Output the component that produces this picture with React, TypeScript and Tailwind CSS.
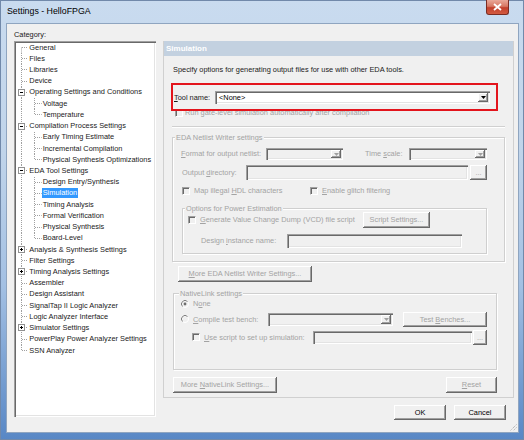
import React from 'react';

type Item = { t: string; l: 0 | 1; ex?: '-' | '+'; last?: boolean; sel?: boolean };

const items: Item[] = [
  { t: 'General', l: 0 },
  { t: 'Files', l: 0 },
  { t: 'Libraries', l: 0 },
  { t: 'Device', l: 0 },
  { t: 'Operating Settings and Conditions', l: 0, ex: '-' },
  { t: 'Voltage', l: 1 },
  { t: 'Temperature', l: 1, last: true },
  { t: 'Compilation Process Settings', l: 0, ex: '-' },
  { t: 'Early Timing Estimate', l: 1 },
  { t: 'Incremental Compilation', l: 1 },
  { t: 'Physical Synthesis Optimizations', l: 1, last: true },
  { t: 'EDA Tool Settings', l: 0, ex: '-' },
  { t: 'Design Entry/Synthesis', l: 1 },
  { t: 'Simulation', l: 1, sel: true },
  { t: 'Timing Analysis', l: 1 },
  { t: 'Formal Verification', l: 1 },
  { t: 'Physical Synthesis', l: 1 },
  { t: 'Board-Level', l: 1, last: true },
  { t: 'Analysis & Synthesis Settings', l: 0, ex: '+' },
  { t: 'Filter Settings', l: 0 },
  { t: 'Timing Analysis Settings', l: 0, ex: '+' },
  { t: 'Assembler', l: 0 },
  { t: 'Design Assistant', l: 0 },
  { t: 'SignalTap II Logic Analyzer', l: 0 },
  { t: 'Logic Analyzer Interface', l: 0 },
  { t: 'Simulator Settings', l: 0, ex: '+' },
  { t: 'PowerPlay Power Analyzer Settings', l: 0 },
  { t: 'SSN Analyzer', l: 0 },
];

const sunken = 'shadow-[inset_1px_1px_0_#a0a0a0,inset_2px_2px_0_#696969,inset_-1px_-1px_0_#ffffff,inset_-2px_-2px_0_#e3e3e3]';
const raised = 'shadow-[inset_-1px_-1px_0_#696969,inset_1px_1px_0_#ffffff,inset_-2px_-2px_0_#a0a0a0]';
const dim = 'text-[#a3a3a3]';

function TreeRow({ it, first, end }: { it: Item; first: boolean; end: boolean }) {
  const H = 11.22;
  const m = 5.5;
  const dot = { stroke: '#a0a0a0', strokeDasharray: '1 1' };
  return (
    <div className="flex h-[11.22px] items-center">
      {it.l === 0 ? (
        <svg width="14.3" height={H} className="shrink-0">
          <line x1="7.5" y1={first ? m : 0} x2="7.5" y2={end ? m : H} {...dot} />
          <line x1="8" y1={m} x2="14.3" y2={m} {...dot} />
          {it.ex && (
            <g>
              <rect x="4.5" y="2.5" width="6" height="6" fill="#fff" stroke="#919191" />
              <line x1="6" y1={m} x2="9" y2={m} stroke="#000" />
              {it.ex === '+' && <line x1="7.5" y1="4" x2="7.5" y2="7" stroke="#000" />}
            </g>
          )}
        </svg>
      ) : (
        <svg width="27.7" height={H} className="shrink-0">
          <line x1="7.5" y1="0" x2="7.5" y2={H} {...dot} />
          <line x1="20.5" y1="0" x2="20.5" y2={it.last ? m : H} {...dot} />
          <line x1="21" y1={m} x2="27.7" y2={m} {...dot} />
        </svg>
      )}
      <span className={`px-[1px] leading-[10px] whitespace-nowrap ${it.sel ? 'bg-[#3399ff] text-white' : 'text-[#1a1a1a]'}`}>{it.t}</span>
    </div>
  );
}

function Arrow({ on }: { on?: boolean }) {
  return (
    <svg width="5" height="3" className="shrink-0">
      <path d="M0 0h5L2.5 3z" fill={on ? '#000' : '#a0a0a0'} />
    </svg>
  );
}

function Combo({ className, text, on }: { className: string; text?: string; on?: boolean }) {
  return (
    <div className={`flex items-stretch p-[2px] ${sunken} ${on ? 'bg-white' : 'bg-[#f0f0f0]'} ${className}`}>
      <div className="flex-1 flex items-center pl-[2px] leading-[9px] text-black">{text}</div>
      <div className={`w-[10px] flex items-center justify-center bg-[#f0f0f0] ${raised}`}>
        <Arrow on={on} />
      </div>
    </div>
  );
}

function Field({ className }: { className: string }) {
  return <div className={`bg-[#f0f0f0] ${sunken} ${className}`} />;
}

function Btn({ className, children, on }: { className: string; children: React.ReactNode; on?: boolean }) {
  return (
    <div className={`flex items-center justify-center bg-[#f0f0f0] leading-[10px] whitespace-nowrap ${raised} ${on ? 'text-black' : dim} ${className}`}>
      <span>{children}</span>
    </div>
  );
}

function Check() {
  return (
    <span className="w-[8px] h-[8px] shrink-0 bg-[#f0f0f0] border border-t-[#a0a0a0] border-l-[#a0a0a0] border-r-white border-b-white shadow-[inset_1px_1px_0_#696969]" />
  );
}

function Radio({ checked }: { checked?: boolean }) {
  return (
    <svg width="8" height="8" className="shrink-0">
      <circle cx="4" cy="4" r="3.5" fill="#f0f0f0" stroke="#ffffff" />
      <path d="M1.5 6.5A3.5 3.5 0 0 1 6.5 1.5" stroke="#808080" fill="none" />
      {checked && <circle cx="4" cy="4" r="1.4" fill="#6e6e6e" />}
    </svg>
  );
}

function Group({ title, tml, className, children }: { title: string; tml: string; className: string; children: React.ReactNode }) {
  return (
    <div className={`border border-[#cfcfcf] shadow-[inset_1px_1px_0_#ffffff,1px_1px_0_#ffffff] ${className}`}>
      <div className={`w-fit -mt-[6.5px] px-[1px] bg-[#f0f0f0] leading-[11px] ${dim} ${tml}`}>{title}</div>
      {children}
    </div>
  );
}

const U = ({ c }: { c: string }) => <span className="underline underline-offset-1">{c}</span>;

export default function App() {
  return (
    <div className="w-[524px] h-[440px] flex flex-col overflow-hidden font-['Liberation_Sans',Arial,sans-serif] text-[7.4px] text-[#1a1a1a] bg-[linear-gradient(180deg,#c9dbef_0%,#c0d4ea_35%,#a3c0e3_65%,#5887c5_100%)] shadow-[inset_0_0_0_1px_#7189aa]">
      {/* title bar */}
      <div className="h-[24px] shrink-0 flex items-start justify-between">
        <div className="ml-[7px] mt-[5px] text-[8.8px] leading-[12px] text-black">Settings - HelloFPGA</div>
        <div className="mr-[15px] w-[23px] h-[15px] flex items-center justify-center rounded-b-[3px] border border-t-0 border-[#7a2c22] bg-[linear-gradient(180deg,#e9a899_0%,#d77863_45%,#c2402c_55%,#d35a40_100%)]">
          <svg width="9" height="8">
            <path d="M1 1L8 7M8 1L1 7" stroke="#ffffff" strokeWidth="1.8" />
          </svg>
        </div>
      </div>

      {/* client */}
      <div className="relative ml-[7px] w-[511px] h-[408px] shrink-0 flex bg-[#f0f0f0] shadow-[0_0_0_1px_#8fa5c0]">
        {/* left */}
        <div className="ml-[7px] pt-[4.5px] flex flex-col w-[142px]">
          <div className="h-[11px] leading-[11px]">Category:</div>
          <div className={`mt-[1.5px] h-[376px] bg-white pt-[1px] ${sunken}`}>
            {items.map((it, i) => (
              <TreeRow key={it.t} it={it} first={i === 0} end={i === items.length - 1} />
            ))}
          </div>
        </div>

        {/* right */}
        <div className="ml-[7px] pt-[17px] flex flex-col">
          <div className="relative w-[351px] h-[357px] border-x border-b border-[#d0d0d0] flex flex-col">
            <div className="h-[15px] bg-[#c3d1e0] text-white font-bold text-[8px] pl-[2px] flex items-center">Simulation</div>
            <div className="mt-[7.5px] ml-[9px] leading-[11px]">Specify options for generating output files for use with other EDA tools.</div>

            <div className="mt-[16.5px] ml-[10px] flex items-center h-[13px]">
              <span className="w-[41px]"><U c="T" />ool name:</span>
              <Combo className="w-[275px] h-[13px]" text="<None>" on />
            </div>

            <div className={`mt-[3.5px] ml-[11px] flex items-center h-[11px] ${dim}`}>
              <Check />
              <span className="ml-[2px]">Run gate-level simulation automatically after compilation</span>
            </div>

            <div className="mt-[7.5px] ml-[8px] w-[333px] h-[2px] border-t border-[#d0d0d0] bg-white" />

            <Group title="EDA Netlist Writer settings" tml="ml-[2px]" className="mt-[9px] ml-[8px] w-[333px] h-[125px]">
              <div className={`mt-[5.5px] ml-[8px] flex items-center h-[12px] ${dim}`}>
                <span className="w-[85px]"><U c="F" />ormat for output netlist:</span>
                <Combo className="w-[77px] h-[12px]" />
                <span className="ml-[22px] w-[44px]">Time <U c="s" />cale:</span>
                <Combo className="w-[78px] h-[12px]" />
              </div>
              <div className={`mt-[5px] ml-[9px] flex items-center h-[15px] ${dim}`}>
                <span className="w-[64px]">Output <U c="d" />irectory:</span>
                <Field className="w-[222px] h-[15px]" />
                <Btn className="ml-[2px] w-[17px] h-[15px]">...</Btn>
              </div>
              <div className={`mt-[5.5px] ml-[9px] flex items-center h-[11px] ${dim}`}>
                <div className="w-[128px] flex items-center">
                  <Check />
                  <span className="ml-[4px]">Map illegal <U c="H" />DL characters</span>
                </div>
                <Check />
                <span className="ml-[4px]"><U c="E" />nable glitch filtering</span>
              </div>
              <Group title="Options for Power Estimation" tml="ml-[2px]" className="mt-[11.5px] ml-[9px] w-[305px] h-[46px]">
                <div className={`-mt-[1.5px] ml-[5px] flex items-center h-[16px] ${dim}`}>
                  <div className="w-[175px] flex items-center">
                    <Check />
                    <span className="ml-[4px]"><U c="G" />enerate Value Change Dump (VCD) file script</span>
                  </div>
                  <Btn className="w-[67px] h-[16px]">Script Settings...</Btn>
                </div>
                <div className={`mt-[6px] ml-[18px] flex items-center h-[14px] ${dim}`}>
                  <span className="w-[86px]">Design <U c="i" />nstance name:</span>
                  <Field className="w-[175px] h-[14px]" />
                </div>
              </Group>
            </Group>

            <Btn className="mt-[4px] ml-[14px] w-[134px] h-[16px]"><U c="M" />ore EDA Netlist Writer Settings...</Btn>

            <Group title="NativeLink settings" tml="ml-[5px]" className="mt-[11px] ml-[9px] w-[324px] h-[77px]">
              <div className={`ml-[7px] flex items-center h-[11px] ${dim}`}>
                <Radio checked />
                <span className="ml-[4px]">N<U c="o" />ne</span>
              </div>
              <div className={`mt-[2.5px] ml-[7px] flex items-center h-[15px] ${dim}`}>
                <div className="w-[87px] flex items-center">
                  <Radio />
                  <span className="ml-[4px]"><U c="C" />ompile test bench:</span>
                </div>
                <Combo className="w-[125px] h-[13px]" />
                <Btn className="ml-[10px] w-[84px] h-[15px]">Test <U c="B" />enches...</Btn>
              </div>
              <div className={`mt-[3px] ml-[18px] flex items-center h-[15px] ${dim}`}>
                <div className="w-[121px] flex items-center">
                  <Check />
                  <span className="ml-[4px]"><U c="U" />se script to set up simulation:</span>
                </div>
                <Field className="w-[159px] h-[13px]" />
                <Btn className="ml-[1px] w-[14px] h-[15px]">...</Btn>
              </div>
            </Group>

            <div className="mt-[7px] ml-[9px] w-[324px] h-[16px] flex justify-between">
              <Btn className="w-[104px] h-[16px]">More <U c="N" />ativeLink Settings...</Btn>
              <Btn className="w-[51px] h-[16px]"><U c="R" />eset</Btn>
            </div>

            {/* red annotation box */}
            <div className="absolute left-[7px] top-[42px] w-[327px] h-[28px] border-2 border-[#e3141c]" />
          </div>

          <div className="mt-[7px] pr-[8px] flex justify-end gap-[8px]">
            <Btn className="w-[52px] h-[15px]" on>OK</Btn>
            <Btn className="w-[52px] h-[15px]" on>Cancel</Btn>
          </div>
        </div>

        <svg width="8" height="8" className="absolute right-[1px] bottom-[1px]">
          <path d="M7.5 1.5L1.5 7.5M7.5 4.5L4.5 7.5" stroke="#a0a0a0" strokeDasharray="1 1" />
        </svg>
      </div>
    </div>
  );
}
